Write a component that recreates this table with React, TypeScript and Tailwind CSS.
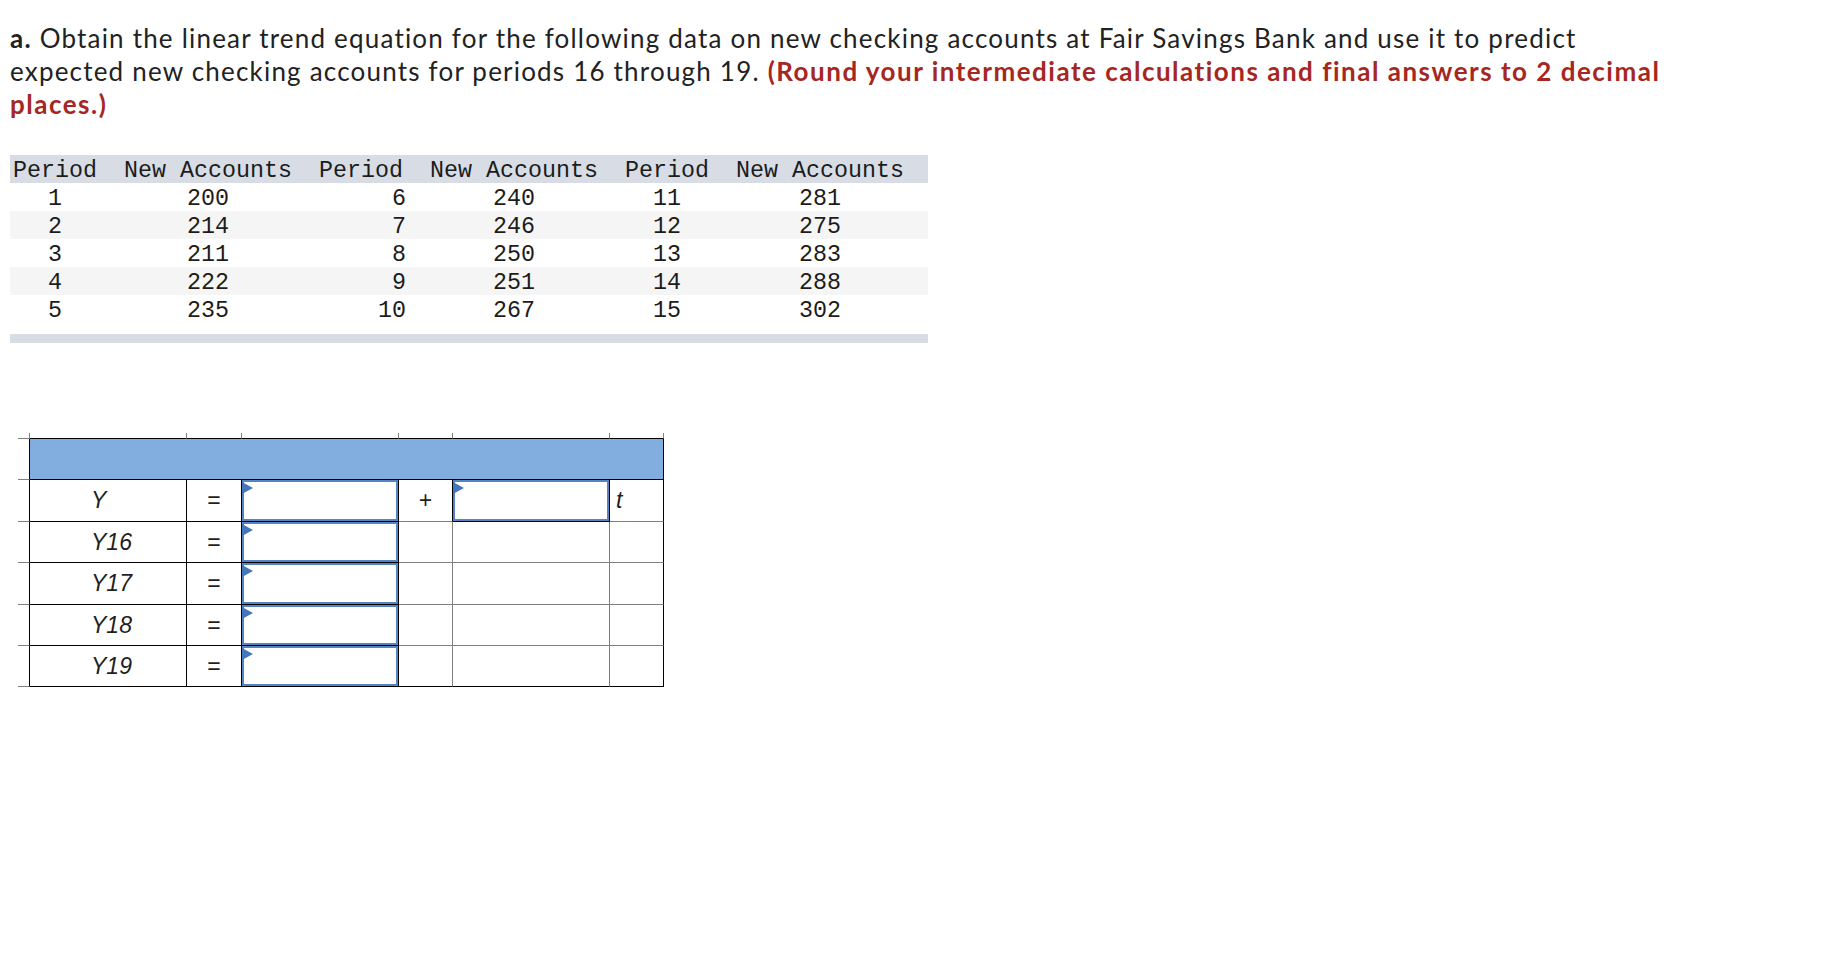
import React from "react";

const dataRows = [
  ["1", "200", "6", "240", "11", "281"],
  ["2", "214", "7", "246", "12", "275"],
  ["3", "211", "8", "250", "13", "283"],
  ["4", "222", "9", "251", "14", "288"],
  ["5", "235", "10", "267", "15", "302"],
];

const labels = ["Y", "Y16", "Y17", "Y18", "Y19"];

function AnswerBox() {
  return (
    <div className="relative h-full w-full border-2 border-[#5683c2] bg-white">
      <svg className="absolute -left-[2px] top-0" width="11" height="12" viewBox="0 0 11 12">
        <polygon points="0,0 11,6 0,12" fill="#4677bb" />
      </svg>
    </div>
  );
}

function DataTable() {
  const cols = "grid grid-cols-[84px_168px_84px_168px_84px_168px] gap-x-[27px] pl-[3px] h-[28px] pt-[4px] leading-[24px]";
  return (
    <div className="w-[918px] font-['Liberation_Mono',monospace] text-[23.33px] text-[#1c1c1c]">
      <div className={`${cols} bg-[#d8dde5]`}>
        <span>Period</span>
        <span>New Accounts</span>
        <span>Period</span>
        <span>New Accounts</span>
        <span>Period</span>
        <span>New Accounts</span>
      </div>
      {dataRows.map((r, i) => (
        <div key={i} className={`${cols} ${i % 2 === 1 ? "bg-[#f5f5f5]" : "bg-white"}`}>
          <span className="text-center">{r[0]}</span>
          <span className="text-center">{r[1]}</span>
          <span className="text-right -mr-[3px]">{r[2]}</span>
          <span className="text-center">{r[3]}</span>
          <span className="text-center">{r[4]}</span>
          <span className="text-center">{r[5]}</span>
        </div>
      ))}
      <div className="h-[11px]" />
      <div className="h-[9px] bg-[#d8dde5]" />
    </div>
  );
}

function Worksheet() {
  const gray = "border-[#808080]";
  return (
    <div className="ml-[8px] grid grid-cols-[12px_157px_55px_157px_54px_157px_54px] grid-rows-[6px_41px_42px_41px_42px_41px_41px] font-['Liberation_Sans',Arial,sans-serif] text-[23px] text-[#1f1f1f]">
      {/* tick row */}
      <div className={`border-r border-b ${gray}`} />
      {[0, 1, 2, 3, 4, 5].map((c) => (
        <div key={c} className="border-r border-r-[#808080] border-b border-b-black" />
      ))}

      {/* blue header */}
      <div className="border-r border-r-black border-b border-b-[#808080]" />
      <div className="col-span-6 bg-[#82addf] border-r border-b border-black" />

      {labels.map((label, i) => {
        const first = i === 0;
        const last = i === labels.length - 1;
        const grayBottom = last ? "border-b-black" : "border-b-[#808080]";
        return (
          <React.Fragment key={label}>
            <div className="border-r border-r-black border-b border-b-[#808080]" />
            <div className="flex items-center pl-[61px] italic border-r border-b border-black">
              {label}
            </div>
            <div className="flex items-center justify-center border-r border-b border-black">=</div>
            <div className="border-r border-b border-black">
              <AnswerBox />
            </div>
            <div
              className={`flex items-center justify-center border-r border-b ${
                first ? "border-r-black" : "border-r-[#808080]"
              } ${grayBottom}`}
            >
              {first ? "+" : ""}
            </div>
            {first ? (
              <div className="border-r border-b border-black">
                <AnswerBox />
              </div>
            ) : (
              <div className={`border-r border-b border-r-[#808080] ${grayBottom}`} />
            )}
            <div className={`flex items-center pl-[6px] italic border-r border-b border-r-black ${grayBottom}`}>
              {first ? "t" : ""}
            </div>
          </React.Fragment>
        );
      })}
    </div>
  );
}

export default function App() {
  return (
    <div className="min-h-[968px] w-[1840px] bg-white pl-[10px] pt-[22px]">
      <p className="font-['Lato',sans-serif] text-[26px] leading-[33px] tracking-[1.2px] text-[#222222]">
        <b>a.</b> Obtain the linear trend equation for the following data on new checking accounts at Fair Savings Bank and use it to predict
        <br />
        expected new checking accounts for periods 16 through 19.{" "}
        <b className="text-[#a5271f] tracking-[1.5px]">
          (Round your intermediate calculations and final answers to 2 decimal
          <br />
          places.)
        </b>
      </p>

      <div className="mt-[34px]">
        <DataTable />
      </div>

      <div className="mt-[90px]">
        <Worksheet />
      </div>
    </div>
  );
}
